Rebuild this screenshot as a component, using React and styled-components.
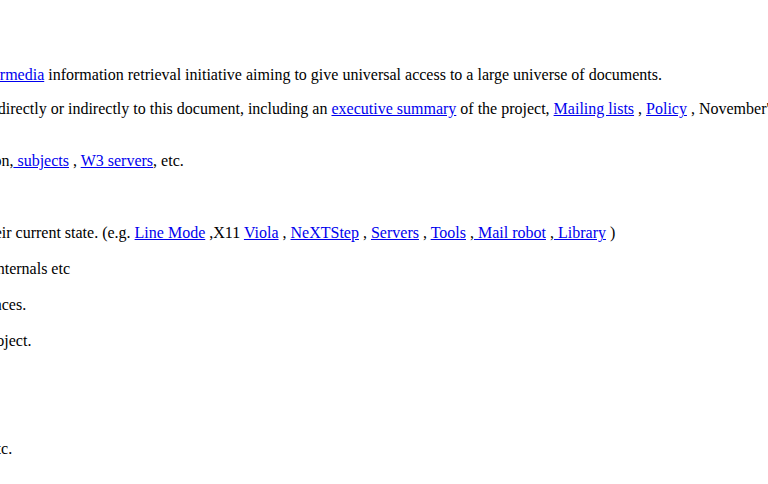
import React from 'react';
import styled, { createGlobalStyle } from 'styled-components';

const GlobalStyle = createGlobalStyle`
  html, body {
    margin: 0;
    padding: 0;
    background: #ffffff;
  }
  body {
    font-family: "Liberation Serif", "Times New Roman", serif;
    font-size: 16px;
    color: #000000;
  }
`;

// the reference shows the page scrolled to the right, so the document is shifted left
const Viewport = styled.div`
  width: 768px;
  height: 484px;
  overflow: hidden;
`;

const Page = styled.div`
  padding: 8px;
  margin-left: -305px;
  margin-top: -22px;
  width: 1400px;
  white-space: nowrap;
`;

const Title = styled.h1`
  font-size: 2em;
  font-weight: bold;
  margin: 0.67em 0;
`;

const Para = styled.p`
  margin: 16px 0;
`;

const Link = styled.a`
  color: #0000ee;
  text-decoration: underline;
`;

const List = styled.dl`
  margin: 16px 0;
`;

const Term = styled.dt`
  margin: 0;
`;

const Desc = styled.dd`
  margin: 0 0 0 40px;
`;

const entries = [
  {
    term: [<Link key="t" href="#">What's out there?</Link>],
    desc: [
      ' Pointers to the world\'s online information,',
      <Link key="a" href="#"> subjects</Link>,
      ' , ',
      <Link key="b" href="#">W3 servers</Link>,
      ', etc.',
    ],
  },
  {
    term: [<Link key="t" href="#">Help</Link>],
    desc: [' on the browser you are using'],
  },
  {
    term: [<Link key="t" href="#">Software Products</Link>],
    desc: [
      ' A list of W3 project components and their current state. (e.g. ',
      <Link key="a" href="#">Line Mode</Link>,
      ' ,X11 ',
      <Link key="b" href="#">Viola</Link>,
      ' , ',
      <Link key="c" href="#">NeXTStep</Link>,
      ' , ',
      <Link key="d" href="#">Servers</Link>,
      ' , ',
      <Link key="e" href="#">Tools</Link>,
      ' ,',
      <Link key="f" href="#"> Mail robot</Link>,
      ' ,',
      <Link key="g" href="#"> Library</Link>,
      ' )',
    ],
  },
  {
    term: [<Link key="t" href="#">Technical</Link>],
    desc: [' Details of protocols, formats, program internals etc'],
  },
  {
    term: [<Link key="t" href="#">Bibliography</Link>],
    desc: [' Paper documentation on W3 and references.'],
  },
  {
    term: [<Link key="t" href="#">People</Link>],
    desc: [' A list of some people involved in the project.'],
  },
  {
    term: [<Link key="t" href="#">History</Link>],
    desc: [' A summary of the history of the project.'],
  },
  {
    term: [<Link key="t" href="#">How can I help</Link>, ' ?'],
    desc: [' If you would like to support the web..'],
  },
  {
    term: [<Link key="t" href="#">Getting code</Link>],
    desc: [
      ' Getting the code by ',
      <Link key="a" href="#">anonymous FTP</Link>,
      ' , etc.',
    ],
  },
];

export default function App() {
  return (
    <Viewport>
      <GlobalStyle />
      <Page>
        <Title>World Wide Web</Title>
        The WorldWideWeb (W3) is a wide-area{' '}
        <Link href="#">hypermedia</Link> information retrieval initiative
        aiming to give universal access to a large universe of documents.
        <Para>
          Everything there is online about W3 is linked directly or indirectly
          to this document, including an <Link href="#">executive summary</Link>{' '}
          of the project, <Link href="#">Mailing lists</Link> ,{' '}
          <Link href="#">Policy</Link> , November's <Link href="#">W3 news</Link>{' '}
          , <Link href="#">Frequently Asked Questions</Link> .
        </Para>
        <List>
          {entries.map((e, i) => (
            <React.Fragment key={i}>
              <Term>{e.term}</Term>
              <Desc>{e.desc}</Desc>
            </React.Fragment>
          ))}
        </List>
      </Page>
    </Viewport>
  );
}
